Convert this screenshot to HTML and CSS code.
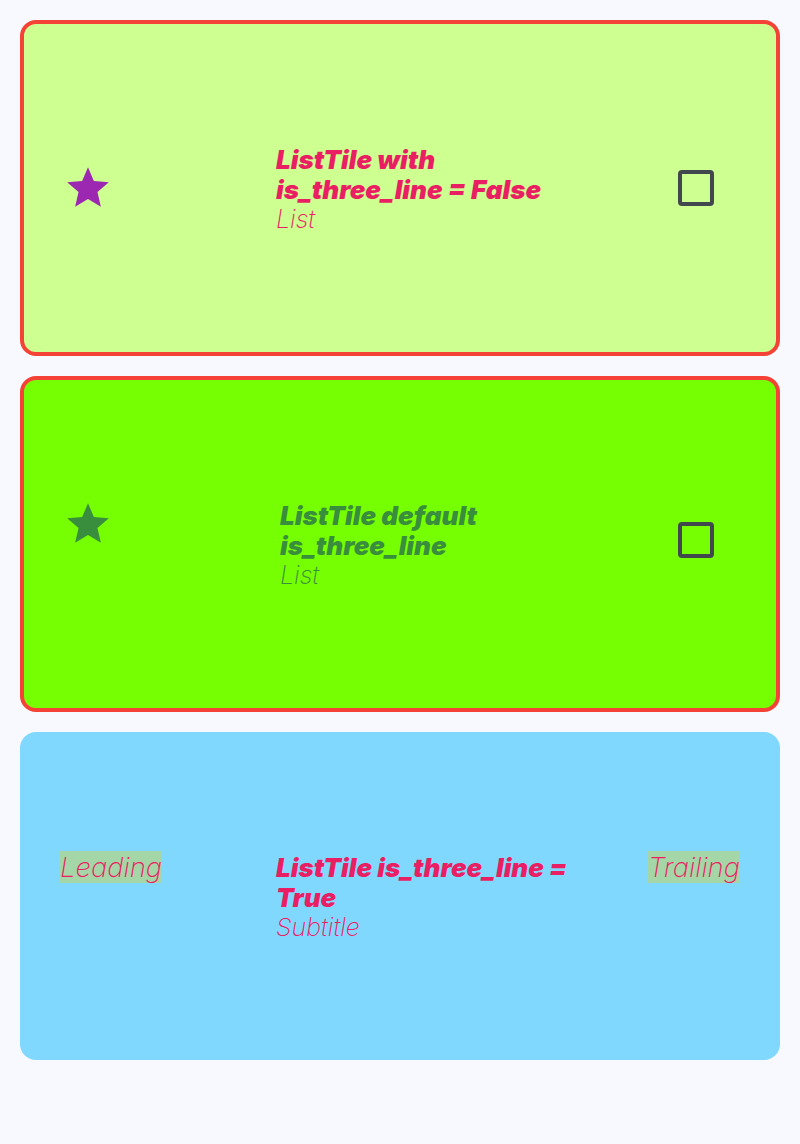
FILE: index.html
```html
<!DOCTYPE html>
<html>
<head>
<meta charset="utf-8">
<link rel="stylesheet" href="styles.css">
</head>
<body>
  <div class="card card-light">
    <div class="lead">
      <svg class="star star-purple" viewBox="0 0 24 24"><path d="M12 17.27L18.18 21l-1.64-7.03L22 9.24l-7.19-.61L12 2 9.19 8.63 2 9.24l5.46 4.73L5.82 21z"/></svg>
    </div>
    <div class="body">
      <div class="title pink">ListTile with<br>is_three_line = False</div>
      <div class="subtitle pink">List</div>
    </div>
    <div class="checkbox"></div>
  </div>

  <div class="card card-green">
    <div class="lead lead-wide lead-top">
      <svg class="star star-green" viewBox="0 0 24 24"><path d="M12 17.27L18.18 21l-1.64-7.03L22 9.24l-7.19-.61L12 2 9.19 8.63 2 9.24l5.46 4.73L5.82 21z"/></svg>
    </div>
    <div class="body">
      <div class="title green">ListTile default<br>is_three_line</div>
      <div class="subtitle green">List</div>
    </div>
    <div class="checkbox checkbox-up"></div>
  </div>

  <div class="card card-blue">
    <div class="row-top">
      <div class="lead">
        <span class="tag">Leading</span>
      </div>
      <div class="body">
        <div class="title pink">ListTile is_three_line =<br>True</div>
        <div class="subtitle pink">Subtitle</div>
      </div>
      <span class="tag tag-trail">Trailing</span>
    </div>
  </div>
</body>
</html>
```

FILE: styles.css
```css
html, body {
  margin: 0;
  padding: 0;
  background: #f8f9ff;
}

body {
  padding-top: 20px;
  font-family: Inter, Roboto, "Liberation Sans", sans-serif;
}

.card {
  box-sizing: border-box;
  margin: 0 20px 20px;
  height: 336px;
  border-radius: 16px;
  display: flex;
  align-items: center;
}

.card-light {
  background: #ceff91;
  border: 4px solid #f44336;
  padding: 0 36px;
}

.card-green {
  background: #76ff03;
  border: 4px solid #f44336;
  padding: 0 36px;
}

.card-blue {
  background: #80d8ff;
  height: 328px;
  padding: 0 40px;
}

.row-top {
  display: flex;
  align-items: flex-start;
  width: 100%;
}

.lead {
  width: 216px;
  flex: none;
  display: flex;
  align-items: center;
}

.lead-wide {
  width: 220px;
}

.lead-top {
  align-self: flex-start;
  margin-top: 119px;
}

.star {
  width: 50px;
  height: 50px;
  margin-left: 3px;
  display: block;
}

.star-purple { fill: #9c27b0; }
.star-green { fill: #388e3c; }

.body {
  width: 320px;
  flex: none;
  padding-top: 2px;
}

.title {
  font-size: 26px;
  line-height: 30px;
  font-weight: 900;
  font-style: italic;
}

.subtitle {
  font-size: 25px;
  line-height: 28px;
  font-weight: 200;
  font-style: italic;
}

.pink { color: #e91e63; }
.green { color: #388e3c; }

.checkbox {
  box-sizing: border-box;
  width: 36px;
  height: 36px;
  border: 4px solid #41484d;
  border-radius: 4px;
  margin-left: auto;
  margin-right: 26px;
  flex: none;
}

.checkbox-up {
  margin-bottom: 8px;
}

.tag {
  background: #a5d6a7;
  color: #e91e63;
  font-size: 27.5px;
  line-height: 32px;
  font-weight: 200;
  font-style: italic;
  display: inline-block;
}

.tag-trail {
  margin-left: auto;
  flex: none;
}
```
